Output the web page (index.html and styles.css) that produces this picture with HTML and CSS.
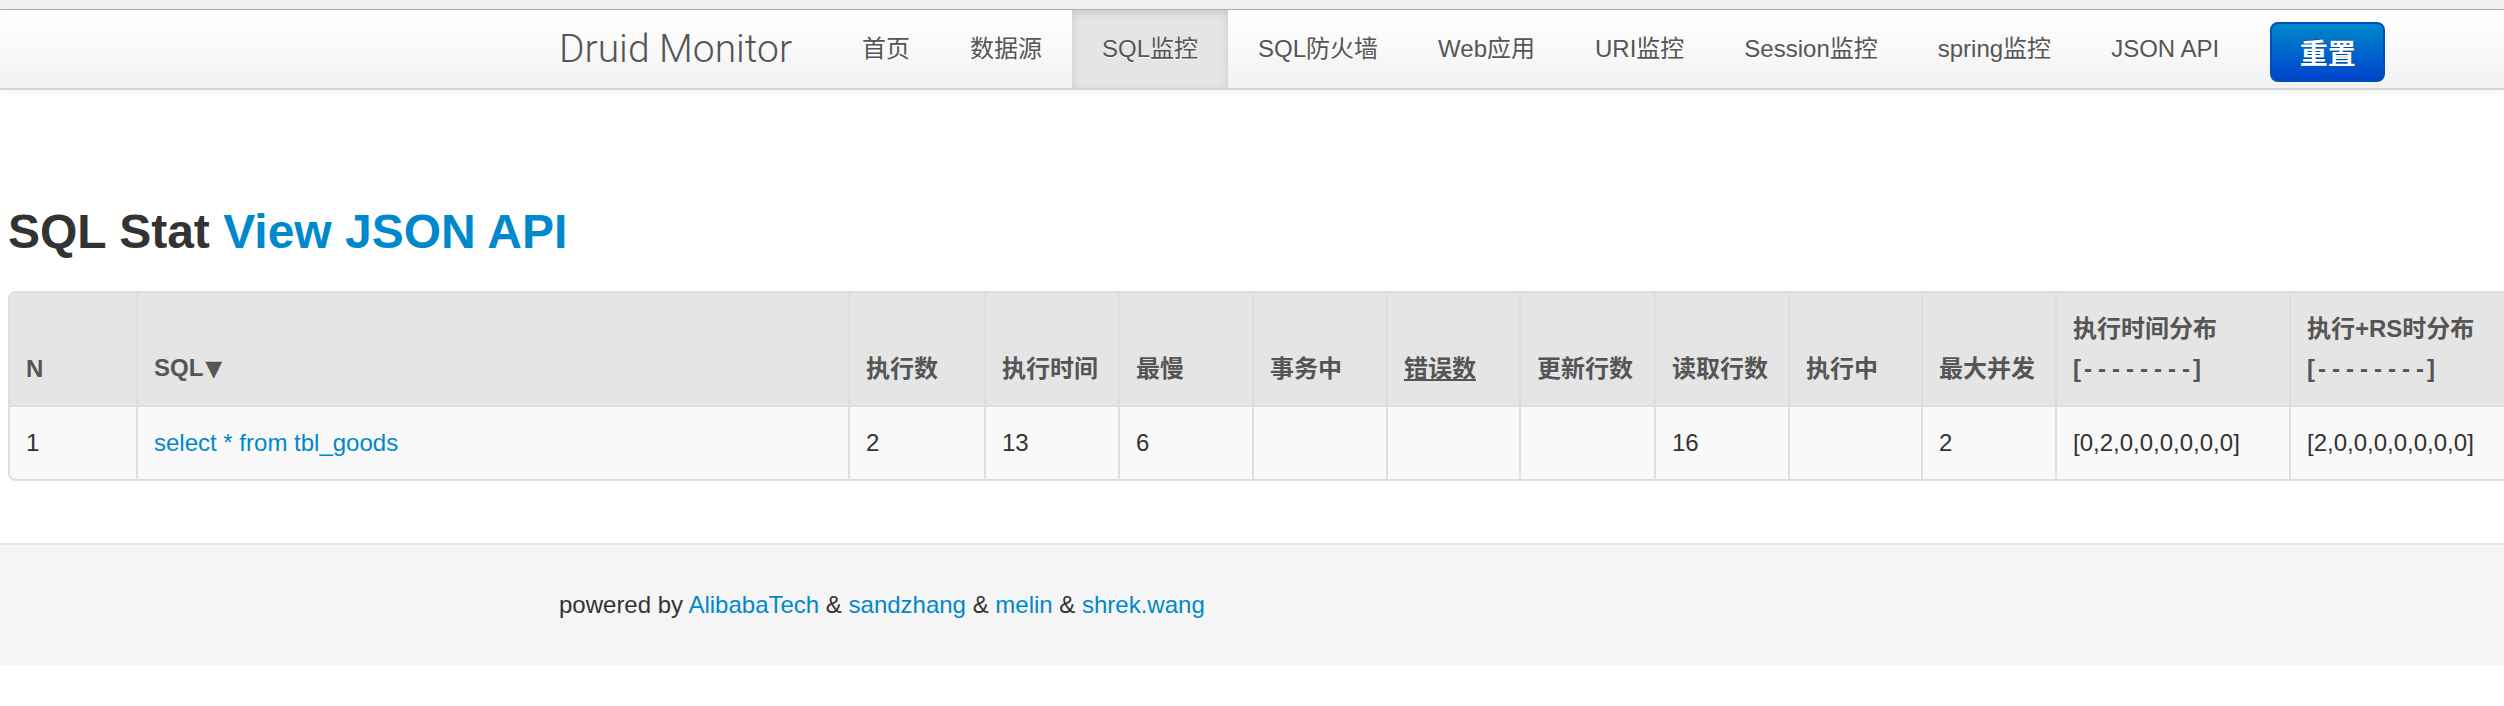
FILE: index.html
```html
<!DOCTYPE html>
<html lang="zh-CN">
<head>
<meta charset="utf-8">
<title>Druid Monitor - SQL Stat</title>
<link rel="stylesheet" href="styles.css">
</head>
<body>
<div class="topstrip"></div>
<header class="navbar">
  <div class="container nav-row">
    <a class="brand" href="#">Druid Monitor</a>
    <ul class="nav">
      <li><a href="#">首页</a></li>
      <li><a href="#">数据源</a></li>
      <li class="active"><a href="#">SQL监控</a></li>
      <li><a href="#">SQL防火墙</a></li>
      <li><a href="#">Web应用</a></li>
      <li><a href="#">URI监控</a></li>
      <li><a href="#">Session监控</a></li>
      <li><a href="#">spring监控</a></li>
      <li><a href="#">JSON API</a></li>
    </ul>
    <button class="btn-reset" type="button">重置</button>
  </div>
</header>

<main class="content">
  <h3 class="title">SQL Stat <a href="#">View JSON API</a></h3>
  <table class="stat">
    <colgroup>
      <col class="c-n">
      <col class="c-sql">
      <col class="c-num c-w136">
      <col class="c-num">
      <col class="c-num">
      <col class="c-num">
      <col class="c-num c-w133">
      <col class="c-num c-w135">
      <col class="c-num">
      <col class="c-num c-w133">
      <col class="c-num">
      <col class="c-hist">
      <col class="c-last">
    </colgroup>
    <thead>
      <tr>
        <th>N</th>
        <th>SQL<span class="sort">▼</span></th>
        <th>执行数</th>
        <th>执行时间</th>
        <th>最慢</th>
        <th>事务中</th>
        <th><a class="th-link" href="#">错误数</a></th>
        <th>更新行数</th>
        <th>读取行数</th>
        <th>执行中</th>
        <th>最大并发</th>
        <th>执行时间分布<br><span class="bars">[<span>-</span><span>-</span><span>-</span><span>-</span><span>-</span><span>-</span><span>-</span><span>-</span>]</span></th>
        <th>执行+RS时分布<br><span class="bars">[<span>-</span><span>-</span><span>-</span><span>-</span><span>-</span><span>-</span><span>-</span><span>-</span>]</span></th>
      </tr>
    </thead>
    <tbody>
      <tr>
        <td>1</td>
        <td><a href="#">select * from tbl_goods</a></td>
        <td>2</td>
        <td>13</td>
        <td>6</td>
        <td></td>
        <td></td>
        <td></td>
        <td>16</td>
        <td></td>
        <td>2</td>
        <td>[0,2,0,0,0,0,0,0]</td>
        <td>[2,0,0,0,0,0,0,0]</td>
      </tr>
    </tbody>
  </table>
</main>

<footer class="footer">
  <div class="container">
    powered by <a href="#">AlibabaTech</a> &amp; <a href="#">sandzhang</a> &amp; <a href="#">melin</a> &amp; <a href="#">shrek.wang</a>
  </div>
</footer>
</body>
</html>
```

FILE: styles.css
```css
* {
  box-sizing: border-box;
}

html,
body {
  margin: 0;
  padding: 0;
}

body {
  font-family: "Liberation Sans", "Noto Sans CJK SC", sans-serif;
  font-size: 24px;
  line-height: 40px;
  color: #333;
  background: #fff;
  overflow-x: hidden;
}

a {
  color: #0088cc;
  text-decoration: none;
}

.topstrip {
  height: 10px;
  background: #f1f1f1;
  border-bottom: 1px solid #b4b4b4;
}

.navbar {
  height: 80px;
  background: linear-gradient(#ffffff, #f2f2f2);
  border-bottom: 2px solid #d6d6d6;
  box-shadow: 0 2px 10px rgba(0, 0, 0, 0.05);
}

.container {
  width: 1386px;
  margin: 0 auto;
}

.nav-row {
  display: flex;
  align-items: center;
  height: 78px;
  white-space: nowrap;
}

.brand {
  flex-shrink: 0;
  font-family: Roboto, "Liberation Sans", sans-serif;
  font-weight: 300;
  font-size: 39px;
  color: #555;
  padding-right: 40px;
  text-shadow: 0 1px 0 #fff;
}

.nav {
  display: flex;
  flex-shrink: 0;
  list-style: none;
  margin: 0;
  padding: 0;
  height: 78px;
}

.nav a {
  display: block;
  padding: 0 30px;
  line-height: 78px;
  color: #555;
  text-shadow: 0 1px 0 #fff;
}

.nav .active a {
  background: #e5e5e5;
  box-shadow: inset 0 3px 8px rgba(0, 0, 0, 0.125);
}

.btn-reset {
  flex-shrink: 0;
  align-self: flex-start;
  margin: 12px 0 0 21px;
  width: 115px;
  height: 60px;
  border: 2px solid #0050b8;
  border-radius: 8px;
  background: linear-gradient(#0088cc, #0044cc);
  color: #fff;
  font-family: "Liberation Sans", "Noto Sans CJK SC", sans-serif;
  font-size: 28px;
  font-weight: bold;
  text-shadow: 0 -1px 0 rgba(0, 0, 0, 0.25);
  padding: 0;
}

.content {
  padding: 0 8px;
}

.title {
  margin: 115px 0 32px;
  font-size: 48px;
  line-height: 54px;
  font-weight: bold;
  color: #333;
}

.stat {
  border-collapse: separate;
  border-spacing: 0;
  border: 2px solid #ddd;
  border-radius: 8px;
  table-layout: fixed;
  width: 2543px;
}

.c-n { width: 126px; }
.c-sql { width: 712px; }
.c-num { width: 134px; }
.c-w136 { width: 136px; }
.c-w133 { width: 133px; }
.c-w135 { width: 135px; }
.c-hist { width: 234px; }
.c-last { width: 260px; }

.stat th,
.stat td {
  padding: 16px;
  text-align: left;
  line-height: 40px;
  border-left: 2px solid #ddd;
  white-space: nowrap;
  overflow: hidden;
}

.stat th:first-child,
.stat td:first-child {
  border-left: 0;
}

.stat th {
  background: #e5e5e5;
  color: #555;
  font-weight: bold;
  vertical-align: bottom;
}

.stat thead th:first-child {
  border-top-left-radius: 6px;
}

.stat td {
  background: #f9f9f9;
  border-top: 2px solid #ddd;
  vertical-align: top;
  color: #333;
}

.stat tbody td:first-child {
  border-bottom-left-radius: 6px;
}

.sort {
  font-family: "DejaVu Sans", sans-serif;
  font-size: 22px;
  margin-left: 2px;
}

.th-link {
  color: #555;
  text-decoration: underline;
}

.bars span {
  margin: 0 3px;
}

.footer {
  margin-top: 62px;
  border-top: 2px solid #e5e5e5;
  background: #f5f5f5;
  padding: 40px 0;
}
```
